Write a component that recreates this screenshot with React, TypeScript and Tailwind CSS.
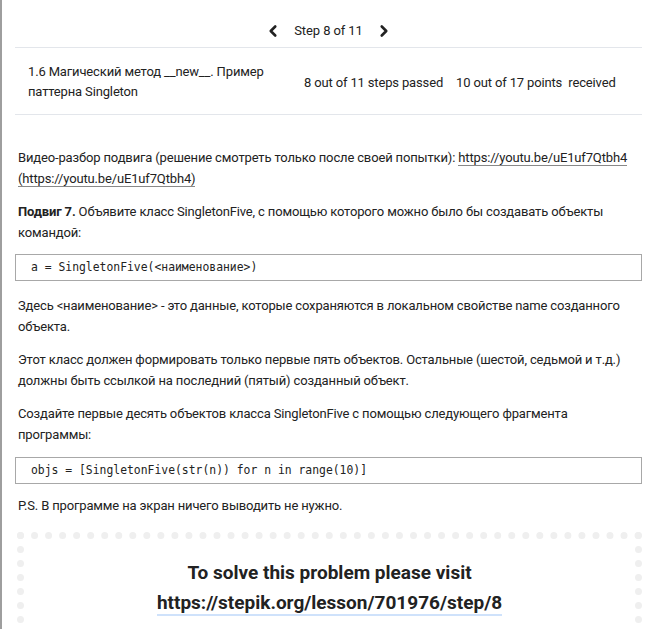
import { ChevronLeft, ChevronRight } from "lucide-react"

export default function App() {
  return (
    <div className="min-h-[629px] bg-white border-l-2 border-[#9e9e9e] font-['Roboto',sans-serif] text-[#222] overflow-hidden">
      <div className="pl-[13px] pr-[14px]">
        <div className="h-[48px] flex items-center justify-center gap-[12px] pt-[14px] border-b border-[#e3e6eb]">
          <ChevronLeft className="w-[18px] h-[18px] text-[#222]" strokeWidth={3.5} />
          <span className="text-[13px] tracking-[-0.1px]">Step 8 of 11</span>
          <ChevronRight className="w-[18px] h-[18px] text-[#222]" strokeWidth={3.5} />
        </div>

        <div className="h-[67px] flex items-center border-b border-[#e3e6eb] text-[13px] leading-[20px] tracking-[-0.15px]">
          <div className="pl-[13px] w-[289px] pt-[2px]">
            1.6 Магический метод __new__. Пример паттерна Singleton
          </div>
          <div className="flex gap-[13px] pt-[4px]">
            <span>8 out of 11 steps passed</span>
            <span>10 out of 17 points&nbsp; received</span>
          </div>
        </div>

        <div className="pl-[3px] pt-[32px] text-[13px] leading-[21px] tracking-[-0.15px]">
          <p>
            Видео-разбор подвига (решение смотреть только после своей попытки):{" "}
            <a className="border-b border-[#888]">https://youtu.be/uE1uf7Qtbh4</a>{" "}
            <a className="border-b border-[#888]">(https://youtu.be/uE1uf7Qtbh4)</a>
          </p>

          <p className="mt-[12px]">
            <b>Подвиг 7.</b> Объявите класс SingletonFive, с помощью которого можно было бы создавать объекты командой:
          </p>

          <pre className="mt-[11px] -ml-[3px] h-[27px] flex items-center border border-[#a8a8a8] px-[15px] font-['DejaVu_Sans_Mono',monospace] text-[11.4px] tracking-normal text-[#222]">
            a = SingletonFive(&lt;наименование&gt;)
          </pre>

          <p className="mt-[14px]">
            Здесь &lt;наименование&gt; - это данные, которые сохраняются в локальном свойстве name созданного объекта.
          </p>

          <p className="mt-[12px]">
            Этот класс должен формировать только первые пять объектов. Остальные (шестой, седьмой и т.д.) должны быть ссылкой на последний (пятый) созданный объект.
          </p>

          <p className="mt-[12px]">
            Создайте первые десять объектов класса SingletonFive с помощью следующего фрагмента программы:
          </p>

          <pre className="mt-[12px] -ml-[3px] h-[27px] flex items-center border border-[#a8a8a8] px-[15px] font-['DejaVu_Sans_Mono',monospace] text-[11.4px] tracking-normal text-[#222]">
            objs = [SingletonFive(str(n)) for n in range(10)]
          </pre>

          <p className="mt-[11px]">P.S. В программе на экран ничего выводить не нужно.</p>

          <div className="mt-[16px] -ml-[1px] border-[7px] border-dotted border-[#efefef] pt-[19px] pb-[40px] text-center tracking-normal">
            <div className="text-[19px] font-bold leading-[30px]">To solve this problem please visit</div>
            <a className="text-[19px] font-bold leading-[30px] border-b-2 border-[#cfe2fb]">
              https://stepik.org/lesson/701976/step/8
            </a>
          </div>
        </div>
      </div>
    </div>
  )
}
